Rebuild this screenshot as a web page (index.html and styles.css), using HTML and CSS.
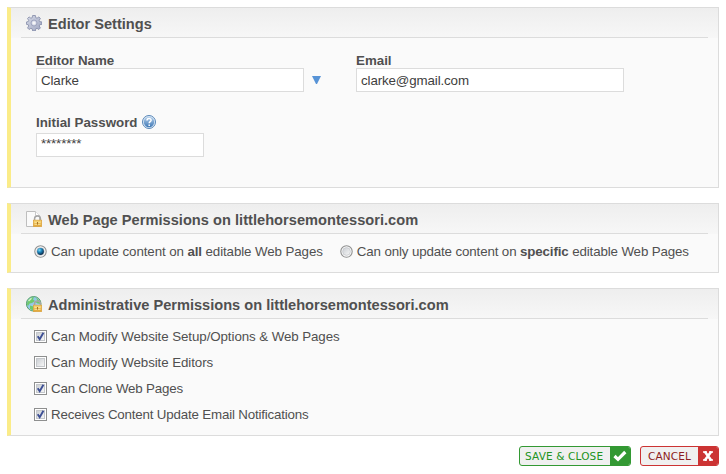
FILE: index.html
```html
<!DOCTYPE html>
<html lang="en">
<head>
<meta charset="utf-8">
<title>Editor Settings</title>
<link rel="stylesheet" href="styles.css">
</head>
<body>
<svg class="defs" width="0" height="0" aria-hidden="true">
  <defs>
    <linearGradient id="gold" x1="0" y1="0" x2="0" y2="1"><stop offset="0" stop-color="#fbdc7c"/><stop offset="1" stop-color="#dfa234"/></linearGradient>
    <linearGradient id="steel" x1="0" y1="0" x2="1" y2="1"><stop offset="0" stop-color="#d5d9e7"/><stop offset="1" stop-color="#9fa6c0"/></linearGradient>
    <linearGradient id="sea" x1="0" y1="0" x2="1" y2="1"><stop offset="0" stop-color="#7dbbe0"/><stop offset="1" stop-color="#b5dbf2"/></linearGradient>
    <linearGradient id="help" x1="0" y1="0" x2="0" y2="1"><stop offset="0" stop-color="#b4d0ec"/><stop offset="1" stop-color="#3f78b5"/></linearGradient>
    <linearGradient id="box" x1="0" y1="0" x2="1" y2="1"><stop offset="0" stop-color="#c9cdd2"/><stop offset="1" stop-color="#f8f8f8"/></linearGradient>
    <radialGradient id="dot" cx=".35" cy=".3" r=".7"><stop offset="0" stop-color="#7fdcf7"/><stop offset=".45" stop-color="#1d86bd"/><stop offset="1" stop-color="#0b2c4c"/></radialGradient>
    <g id="lock">
      <path d="M8.6 9V7.6a2.9 2.7 0 0 1 5.8 0V9" fill="none" stroke="#a5a5a5" stroke-width="1.5"/>
      <rect x="7.4" y="9.2" width="8.2" height="6.3" fill="url(#gold)" stroke="#dca541" stroke-width=".8"/>
      <path d="M8.5 11.5h6M8.5 13.5h6" stroke="#fff0b5" stroke-width=".6"/>
      <path d="M11.5 11v2.6" stroke="#a87424" stroke-width="1.1"/>
    </g>
    <g id="checkbox">
      <rect x=".5" y=".5" width="12" height="12" fill="#fff" stroke="#8e8f8f"/>
      <rect x="2.5" y="2.5" width="8" height="8" fill="url(#box)" stroke="#c4c7cb"/>
    </g>
    <g id="checked">
      <use href="#checkbox"/>
      <path d="M3.7 6.3 5.7 9.3 9.4 2.8" fill="none" stroke="#3d4f94" stroke-width="1.9"/>
    </g>
    <g id="radio">
      <circle cx="6.5" cy="6.5" r="5.7" fill="#fff" stroke="#8e8f8f" stroke-width="1.1"/>
      <circle cx="6.5" cy="6.5" r="3.9" fill="url(#box)" stroke="#c4c7cb" stroke-width=".8"/>
    </g>
  </defs>
</svg>
<main class="page">
  <section class="panel panel-settings">
    <h2 class="panel-title">
      <svg class="title-icon" viewBox="0 0 16 16"><g fill="url(#steel)" stroke="#8189a7" stroke-width=".8"><path d="M6.6.5h2.8l.4 2.2 1.2.5 1.9-1.3 1.5 1.6-1.2 1.8.5 1.3 2.3.4v2.3l-2.3.4-.5 1.3 1.2 1.9-1.6 1.6-1.8-1.2-1.2.5-.4 2.1H6.6l-.4-2.1-1.3-.5-1.8 1.2-1.6-1.6 1.2-1.9-.5-1.3L.4 9.3V7l1.8-.4.5-1.3-1.2-1.8 1.6-1.6 1.8 1.3 1.3-.5z"/></g><circle cx="8" cy="8" r="3" fill="#c7cce0" stroke="#959bb5" stroke-width=".7"/><circle cx="8" cy="8" r="1.8" fill="#f6f6f7"/></svg>
      <span class="t-settings">Editor Settings</span>
    </h2>
    <div class="fields">
      <div class="field">
        <label class="t-name">Editor Name</label>
        <div class="input-row"><div class="input"><span class="t-clarke">Clarke</span></div><svg class="arrow" viewBox="0 0 9 8"><path d="M0 0h9L5 8H4z" fill="#5793d6"/></svg></div>
      </div>
      <div class="field">
        <label>Email</label>
        <div class="input"><span class="t-address">clarke@gmail.com</span></div>
      </div>
      <div class="field">
        <label><span>Initial Password</span><svg class="help" viewBox="0 0 14 14"><circle cx="7" cy="7" r="6.5" fill="#dce9f6" stroke="#5886b7"/><circle cx="7" cy="7" r="5.2" fill="url(#help)"/><path d="M5 5.5C5 2.8 9.2 3 9.1 5.3 9 6.8 7.2 6.6 7.2 8.3M7.2 9.5v1.5" fill="none" stroke="#fff" stroke-width="1.5"/></svg></label>
        <div class="input input-short"><span class="t-stars">********</span></div>
      </div>
    </div>
  </section>

  <section class="panel panel-pages">
    <h2 class="panel-title">
      <svg class="title-icon" viewBox="0 0 16 16"><path d="M.5.5h9l4 4v11H.5z" fill="#fafafa" stroke="#bebebe"/><path d="M9.5.5v4h4" fill="#fff" stroke="#c9c9c9"/><use href="#lock"/></svg>
      <span class="t-pages">Web Page Permissions on littlehorsemontessori.com</span>
    </h2>
    <div class="radios">
      <div class="option"><svg class="control" viewBox="0 0 13 13"><use href="#radio"/><circle cx="6.5" cy="6.5" r="3.4" fill="url(#dot)"/></svg><span class="t-all">Can update content on <b>all</b> editable Web Pages</span></div>
      <div class="option"><svg class="control" viewBox="0 0 13 13"><use href="#radio"/></svg><span class="t-specific">Can only update content on <b>specific</b> editable Web Pages</span></div>
    </div>
  </section>

  <section class="panel panel-admin">
    <h2 class="panel-title">
      <svg class="title-icon" viewBox="0 0 16 16"><circle cx="7.7" cy="7.8" r="7.3" fill="url(#sea)" stroke="#4c9a5e" stroke-width=".9"/><path d="M2 4Q5 .8 8 1L7 3.5 9 5 6 7 3.5 7.5 2 10 .9 8zM10 1.5 14 5l.5 3-3-.5L9.5 6l1.8-1.5zM4 9.5l3.5 1-.5 4-3-1.5z" fill="#6fc96c"/><path d="M2.5 5 5.5 2.3" stroke="#d5f2cd" stroke-width="1.4"/><use href="#lock"/></svg>
      <span class="t-admin">Administrative Permissions on littlehorsemontessori.com</span>
    </h2>
    <div class="checks">
      <div class="option"><svg class="control" viewBox="0 0 13 13"><use href="#checked"/></svg><span class="t-setup">Can Modify Website Setup/Options &amp; Web Pages</span></div>
      <div class="option"><svg class="control" viewBox="0 0 13 13"><use href="#checkbox"/></svg><span class="t-editors">Can Modify Website Editors</span></div>
      <div class="option"><svg class="control" viewBox="0 0 13 13"><use href="#checked"/></svg><span class="t-clone">Can Clone Web Pages</span></div>
      <div class="option"><svg class="control" viewBox="0 0 13 13"><use href="#checked"/></svg><span class="t-receive">Receives Content Update Email Notifications</span></div>
    </div>
  </section>

  <div class="actions">
    <div class="button save"><span class="button-text">SAVE &amp; CLOSE</span><span class="button-icon"><svg width="14" height="12" viewBox="0 0 14 12"><path d="M1.5 6 5 9.3 12.3 2" fill="none" stroke="#fff" stroke-width="3.2"/></svg></span></div>
    <div class="button cancel"><span class="button-text">CANCEL</span><span class="button-icon"><svg width="10" height="10" viewBox="0 0 10 10"><path d="M1.7.5 8.3 9.5M8.3.5 1.7 9.5" stroke="#fff" stroke-width="2.6"/><path d="M0 1h4M6 1h4M0 9h4M6 9h4" stroke="#fff" stroke-width="1.4"/></svg></span></div>
  </div>
</main>
</body>
</html>
```
FILE: styles.css
```css
* { box-sizing: border-box; }
body { margin: 0; background: #fff; color: #505050; font: 13.33px/16px "Liberation Sans", Arial, sans-serif; }
svg { display: block; flex: none; }
.defs { position: absolute; }
.page { width: 726px; height: 474px; padding: 7px; overflow: hidden; }
.panel { width: 712px; border: 1px solid #dcdcdc; border-left: 4px solid #fbec88; background: #fafafa linear-gradient(#eee, #f7f7f7) top / 100% 30px no-repeat; }
.panel-settings { height: 181px; margin-bottom: 15px; }
.panel-pages { height: 70px; margin-bottom: 15px; }
.panel-admin { height: 148px; }
.panel-title { display: flex; align-items: center; gap: 6px; height: 30px; margin: 0 10px; padding: 1px 0 0 5px; border-bottom: 1px solid #dcdcdc; font-size: 14.6px; line-height: 16px; white-space: nowrap; }
.panel-title span { padding-top: 2px; }
.title-icon { width: 16px; height: 16px; }
.t-pages { letter-spacing: .03px; }
.fields { display: grid; grid-template-columns: 320px 268px; row-gap: 22px; padding: 15px 0 0 25px; }
.field label { display: flex; align-items: center; height: 15px; font-weight: bold; white-space: nowrap; }
.field:nth-child(3) label { height: 17px; }
.t-name { letter-spacing: -.04px; }
.input-row { display: flex; align-items: center; gap: 8px; }
.input { display: flex; align-items: center; width: 268px; height: 24px; padding: 1px 4px 0; border: 1px solid #dcdcdc; background: #fff; color: #404040; }
.input-short { width: 168px; margin-top: 2px; padding: 0 4px 3px; }
.t-clarke, .t-address { letter-spacing: -.12px; }
.t-stars { letter-spacing: -.15px; }
.arrow { width: 9px; height: 8px; }
.help { width: 14px; height: 14px; margin: -1px 0 0 5px; }
.radios { display: flex; gap: 17px; padding: 4px 0 0 23px; }
.checks { padding: 4px 0 0 23px; }
.option { display: flex; align-items: center; gap: 4px; height: 26px; white-space: nowrap; }
.option span { padding-top: 1px; }
.control { width: 13px; height: 13px; }
.t-all { letter-spacing: -.1px; }
.t-specific { letter-spacing: -.13px; }
.t-setup, .t-editors { letter-spacing: -.08px; }
.t-clone, .t-receive { letter-spacing: -.18px; }
.actions { display: flex; justify-content: flex-end; gap: 9px; padding: 10px 0 0; }
.button { display: flex; height: 20px; border: 1px solid; border-radius: 3px; background: #f0f0f0; overflow: hidden; }
.button-text { flex: 1; padding-left: 5px; font: 10.5px/19px "DejaVu Sans", sans-serif; letter-spacing: .15px; white-space: nowrap; }
.button-icon { display: flex; align-items: center; justify-content: center; width: 20px; }
.save { width: 112px; border-color: #339933; color: #229322; }
.save .button-icon { background: #339933; }
.cancel { width: 79px; border-color: #cc3333; color: #8c1c20; }
.cancel .button-text { padding-left: 7px; }
.cancel .button-icon { background: #cc3333; }
```
